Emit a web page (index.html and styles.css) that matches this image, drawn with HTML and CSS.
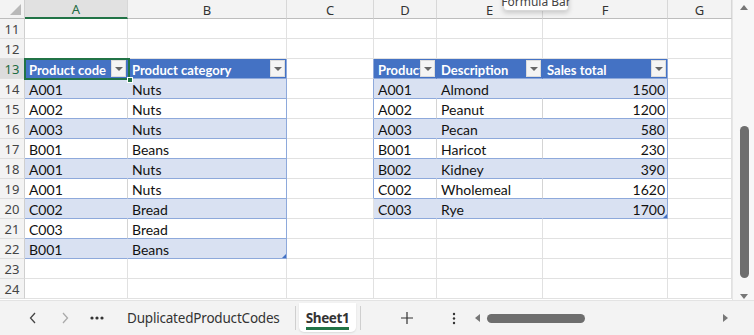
FILE: index.html
```html
<!DOCTYPE html>
<html>
<head>
<meta charset="utf-8">
<link rel="stylesheet" href="styles.css">
</head>
<body>
<div class="app">
  <div class="main">
    <div class="sheet">
      <div class="corner"><span class="tri"></span></div>
      <div class="ch sel">A</div><div class="ch">B</div><div class="ch">C</div><div class="ch">D</div><div class="ch">E</div><div class="ch">F</div><div class="ch">G</div>

      <div class="rh">11</div><div class="c"></div><div class="c"></div><div class="c"></div><div class="c"></div><div class="c"></div><div class="c"></div><div class="c"></div>
      <div class="rh">12</div><div class="c"></div><div class="c"></div><div class="c"></div><div class="c"></div><div class="c"></div><div class="c"></div><div class="c"></div>

      <div class="rh rsel">13</div>
      <div class="c hd"><span class="lbl">Product code</span><span class="dd"></span></div>
      <div class="c hd last"><span class="lbl">Product category</span><span class="dd"></span></div>
      <div class="c edge"></div>
      <div class="c hd"><span class="lbl">Product code</span><span class="dd"></span></div>
      <div class="c hd"><span class="lbl">Description</span><span class="dd"></span></div>
      <div class="c hd last"><span class="lbl">Sales total</span><span class="dd"></span></div>
      <div class="c"></div>

      <div class="rh">14</div><div class="c t bl">A001</div><div class="c t bl last">Nuts</div><div class="c edge"></div><div class="c t bl">A001</div><div class="c t bl">Almond</div><div class="c t bl last num">1500</div><div class="c"></div>
      <div class="rh">15</div><div class="c t wh">A002</div><div class="c t wh last">Nuts</div><div class="c edge"></div><div class="c t wh">A002</div><div class="c t wh">Peanut</div><div class="c t wh last num">1200</div><div class="c"></div>
      <div class="rh">16</div><div class="c t bl">A003</div><div class="c t bl last">Nuts</div><div class="c edge"></div><div class="c t bl">A003</div><div class="c t bl">Pecan</div><div class="c t bl last num">580</div><div class="c"></div>
      <div class="rh">17</div><div class="c t wh">B001</div><div class="c t wh last">Beans</div><div class="c edge"></div><div class="c t wh">B001</div><div class="c t wh">Haricot</div><div class="c t wh last num">230</div><div class="c"></div>
      <div class="rh">18</div><div class="c t bl">A001</div><div class="c t bl last">Nuts</div><div class="c edge"></div><div class="c t bl">B002</div><div class="c t bl">Kidney</div><div class="c t bl last num">390</div><div class="c"></div>
      <div class="rh">19</div><div class="c t wh">A001</div><div class="c t wh last">Nuts</div><div class="c edge"></div><div class="c t wh">C002</div><div class="c t wh">Wholemeal</div><div class="c t wh last num">1620</div><div class="c"></div>
      <div class="rh">20</div><div class="c t bl">C002</div><div class="c t bl last">Bread</div><div class="c"></div><div class="c t bl">C003</div><div class="c t bl">Rye</div><div class="c t bl last num rz">1700</div><div class="c"></div>
      <div class="rh">21</div><div class="c t wh">C003</div><div class="c t wh last">Bread</div><div class="c"></div><div class="c"></div><div class="c"></div><div class="c"></div><div class="c"></div>
      <div class="rh">22</div><div class="c t bl">B001</div><div class="c t bl last rz">Beans</div><div class="c"></div><div class="c"></div><div class="c"></div><div class="c"></div><div class="c"></div>
      <div class="rh">23</div><div class="c"></div><div class="c"></div><div class="c"></div><div class="c"></div><div class="c"></div><div class="c"></div><div class="c"></div>
      <div class="rh">24</div><div class="c"></div><div class="c"></div><div class="c"></div><div class="c"></div><div class="c"></div><div class="c"></div><div class="c"></div>

      <div class="selbox"><span class="handle"></span></div>
      <div class="tip">Formula Bar</div>
    </div>
    <div class="vscroll">
      <span class="arr up"></span>
      <div class="vtrack"><div class="vthumb"></div></div>
      <span class="arr down"></span>
    </div>
  </div>
  <div class="tabbar">
    <span class="nav">
      <svg width="10" height="14" viewBox="0 0 10 14"><path d="M7 2 L2.5 7 L7 12" fill="none" stroke="#444" stroke-width="1.3"/></svg>
    </span>
    <span class="nav">
      <svg width="10" height="14" viewBox="0 0 10 14"><path d="M3 2 L7.5 7 L3 12" fill="none" stroke="#aaa" stroke-width="1.3"/></svg>
    </span>
    <span class="nav">
      <svg width="14" height="4" viewBox="0 0 14 4"><circle cx="2" cy="2" r="1.6" fill="#333"/><circle cx="7" cy="2" r="1.6" fill="#333"/><circle cx="12" cy="2" r="1.6" fill="#333"/></svg>
    </span>
    <span class="tabname">DuplicatedProductCodes</span>
    <span class="sep"></span>
    <span class="tab"><span class="tabtxt">Sheet1</span></span>
    <span class="sep"></span>
    <span class="plus">
      <svg width="14" height="14" viewBox="0 0 14 14"><path d="M7 1 V13 M1 7 H13" stroke="#333" stroke-width="1.2"/></svg>
    </span>
    <span class="kebab">
      <svg width="4" height="14" viewBox="0 0 4 14"><circle cx="2" cy="3" r="1.2" fill="#333"/><circle cx="2" cy="7.5" r="1.2" fill="#333"/><circle cx="2" cy="12" r="1.2" fill="#333"/></svg>
    </span>
    <div class="hscroll">
      <span class="harr left"></span>
      <div class="htrack"><div class="hthumb"></div></div>
      <span class="harr right"></span>
    </div>
  </div>
</div>
</body>
</html>
```

FILE: styles.css
```css
* { box-sizing: border-box; }
html, body { margin: 0; padding: 0; }
body { width: 754px; height: 335px; overflow: hidden; background: #fff; font-family: Lato, "Noto Sans", sans-serif; }

.app { display: flex; flex-direction: column; width: 754px; height: 335px; }
.main { display: flex; height: 300px; }

.sheet {
  position: relative;
  display: grid;
  grid-template-columns: 25px 103px 159px 87px 63px 106px 125px 64px;
  grid-template-rows: 19px repeat(14, 20px);
  width: 732px;
  height: 300px;
  overflow: hidden;
}

.corner { background: #f3f3f3; border-right: 1px solid #cfcfcf; border-bottom: 1px solid #bdbdbd; position: relative; }
.corner .tri { position: absolute; right: 3px; bottom: 3px; width: 0; height: 0; border-left: 11px solid transparent; border-bottom: 11px solid #b9b9b9; }

.ch {
  background: #f3f3f3;
  border-right: 1px solid #d7d7d7;
  border-bottom: 1px solid #bdbdbd;
  font: 13px "Noto Sans", sans-serif;
  color: #333;
  display: flex; align-items: center; justify-content: center;
  padding-top: 1px;
}
.ch.sel { background: #e1e1e1; color: #1e6b41; border-bottom: 2px solid #217346; }

.rh {
  background: #f3f3f3;
  border-right: 1px solid #cfcfcf;
  border-bottom: 1px solid #dedede;
  font: 13px "Noto Sans", sans-serif;
  color: #444;
  display: flex; align-items: center; justify-content: center;
}
.rh.rsel { background: #dcdcdc; color: #1e6b41; }

.c {
  border-right: 1px solid #e1e1e1;
  border-bottom: 1px solid #e1e1e1;
  padding: 2px 3px 0 4px;
  font-size: 14px;
  color: #111;
  display: flex; align-items: center;
  white-space: nowrap;
  overflow: hidden;
  position: relative;
}
.t { border-bottom-color: #8ea9db; }
.bl { background: #d9e1f2; border-right-color: #d9e1f2; }
.wh { background: #fff; border-right-color: #d4d4d4; }
.last { border-right-color: #8ea9db; }
.edge { border-right-color: #8ea9db; }
.num { justify-content: flex-end; padding-right: 2px; }

.hd {
  background: #4472c4;
  border-right-color: #4472c4;
  border-bottom-color: #8ea9db;
  color: #fff;
  font-weight: bold;
  font-size: 13px;
  padding-top: 0;
  padding-right: 1px;
  justify-content: space-between;
}
.hd.last { border-right-color: #8ea9db; }
.lbl { overflow: hidden; flex: 1 1 auto; min-width: 0; padding-top: 2px; }
.dd {
  flex: 0 0 auto;
  width: 15px; height: 17px;
  background: #f4f4f4;
  border: 1px solid #dcdcdc;
  position: relative;
}
.dd::after {
  content: ""; position: absolute; left: 3px; top: 6px;
  border-left: 4px solid transparent; border-right: 4px solid transparent; border-top: 4px solid #666;
}

.rz::after {
  content: ""; position: absolute; right: 0; bottom: 0;
  border-left: 4px solid transparent; border-bottom: 4px solid #4472c4;
}

.selbox {
  position: absolute; left: 24px; top: 58px; width: 106px; height: 22px;
  border: 2px solid #217346;
}
.handle { position: absolute; right: -5px; bottom: -5px; width: 6px; height: 6px; background: #217346; border: 1px solid #fff; }

.tip {
  position: absolute; left: 503px; top: -9px; width: 66px; height: 20px;
  background: #fff; border: 1px solid #d8d8d8; border-radius: 4px;
  box-shadow: 0 2px 5px rgba(0,0,0,0.18);
  font: 12px "Noto Sans", sans-serif; color: #444;
  display: flex; align-items: center; justify-content: center;
  white-space: nowrap;
}

.vscroll {
  width: 22px; height: 300px;
  background: #f7f7f7;
  border-left: 1px solid #e6e6e6;
  display: flex; flex-direction: column; align-items: center;
  padding: 5px 0 0 1px;
}
.arr { width: 0; height: 0; border-left: 4px solid transparent; border-right: 4px solid transparent; }
.arr.up { border-bottom: 5px solid #777; }
.arr.down { border-top: 5px solid #777; margin-bottom: 4px; }
.vtrack { flex: 1; width: 100%; display: flex; justify-content: center; padding-top: 116px; padding-bottom: 16px; }
.vthumb { width: 9px; height: 152px; background: #6e6e6e; border-radius: 5px; }

.tabbar {
  height: 35px;
  background: #f3f3f3;
  border-top: 1px solid #e3e3e3;
  display: flex; align-items: center;
  font: 14px "Noto Sans", sans-serif; color: #333;
  padding-left: 17px;
}
.nav { width: 32px; flex: none; display: flex; justify-content: center; align-items: center; }
.nav svg { display: block; }
.tabname { flex: none; width: 168px; margin-left: 14px; font-size: 13.5px; letter-spacing: -0.2px; white-space: nowrap; }
.sep { flex: none; width: 1px; height: 24px; background: #cfcfcf; }
.tab {
  flex: none;
  align-self: stretch;
  width: 57px;
  margin: 2px 4px 3px 3px;
  background: #fff;
  border-radius: 0 0 5px 5px;
  display: flex; align-items: center; justify-content: center;
  box-shadow: 0 1px 2px rgba(0,0,0,0.1);
}
.tabtxt { font-weight: bold; font-size: 13.5px; border-bottom: 3px solid #217346; line-height: 18px; padding-top: 3px; letter-spacing: -0.4px; }
.plus { flex: none; margin-left: 39px; display: flex; }
.kebab { flex: none; margin-left: 38px; display: flex; }
.hscroll { flex: none; display: flex; align-items: center; margin-left: 19px; width: 253px; }
.harr { width: 0; height: 0; border-top: 4px solid transparent; border-bottom: 4px solid transparent; }
.harr.left { border-right: 5px solid #777; }
.harr.right { border-left: 5px solid #777; }
.htrack { flex: 1; padding: 0 4px 0 7px; }
.hthumb { width: 98px; height: 9px; background: #6e6e6e; border-radius: 5px; }
```
